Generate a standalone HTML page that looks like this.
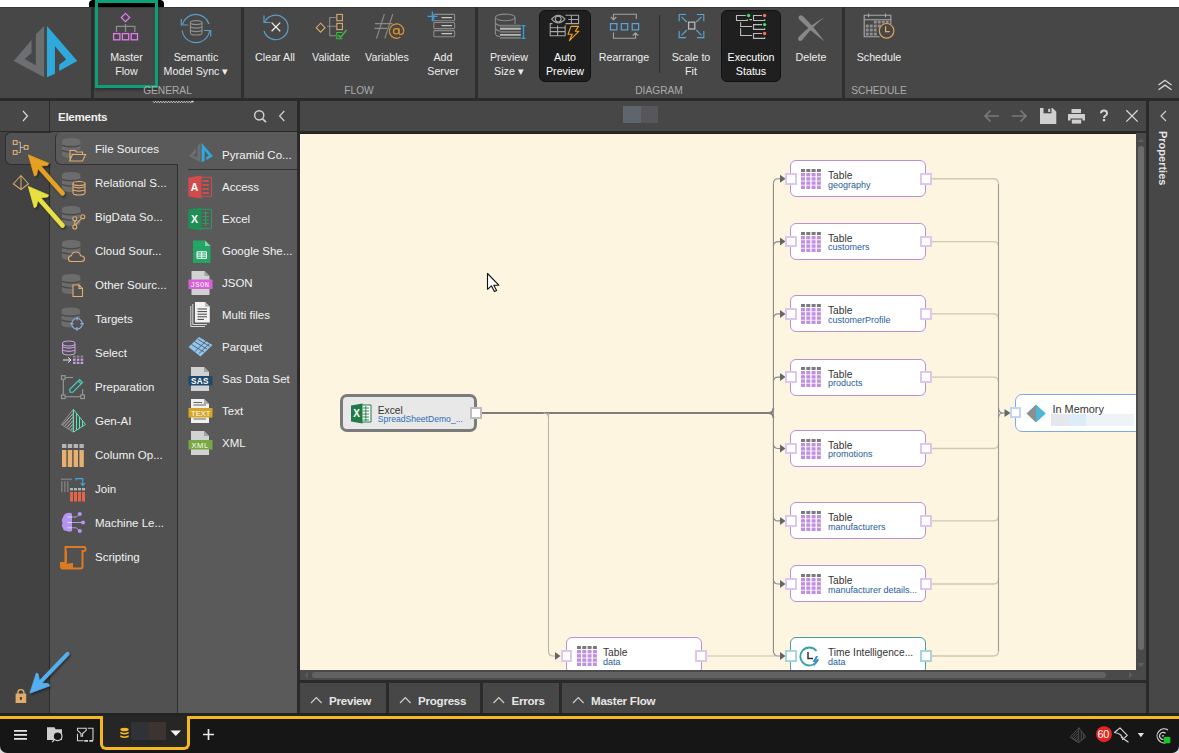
<!DOCTYPE html>
<html><head><meta charset="utf-8">
<style>
*{box-sizing:border-box;margin:0;padding:0}
html,body{width:1179px;height:753px;overflow:hidden;background:#fff;font-family:"Liberation Sans",sans-serif}
.a{position:absolute}
#ribbon{left:0;top:7px;width:1179px;height:91px;background:#474747}
.sep{position:absolute;top:7px;height:91px;width:3px;background:#2f2f2f}
.btn{position:absolute;top:50px;color:#ededed;font-size:10.7px;line-height:14px;text-align:center;white-space:nowrap}
.glabel{position:absolute;top:85px;color:#ababab;font-size:10.2px;line-height:12px;text-align:center}
#row2{left:0;top:98px;width:1179px;height:3px;background:#2a2a2a}
.hdr{position:absolute;top:101px;height:30px;background:#474747}
.cat{position:absolute;left:95px;color:#f2f2f2;font-size:11.5px;line-height:16px;white-space:nowrap}
.itm{position:absolute;left:222px;color:#f2f2f2;font-size:11.5px;line-height:16px;white-space:nowrap}
.node{position:absolute;background:#fff;border:1px solid #b98fd6;border-radius:6px;height:37px;width:136px}
.nt{position:absolute;font-size:10.2px;line-height:12px;color:#333;white-space:nowrap}
.ns{position:absolute;font-size:9px;line-height:10px;color:#1f5d9a;white-space:nowrap}
.port{position:absolute;width:11.6px;height:11.6px;background:#fff;border:2px solid #dcc8ef;margin:-0.5px 0 0 -0.5px}
.tab{top:683px;height:29.5px;background:#474747;color:#e6e6e6;font-size:11.6px;font-weight:700;letter-spacing:-0.25px;line-height:16px;padding:10px 0 0 29px;white-space:nowrap}
</style></head><body>
<!-- top white strip + black tab -->
<div class="a" style="left:89px;top:0;width:75px;height:8px;background:#000;border-radius:4px 4px 0 0"></div>
<div id="ribbon" class="a"></div>
<div class="a" style="left:0;top:7px;width:1179px;height:1px;background:#3a3a3a"></div>
<div class="sep" style="left:91px"></div>
<div class="sep" style="left:241px"></div>
<div class="sep" style="left:475px"></div>
<div class="sep" style="left:842px"></div>
<div id="row2" class="a"></div>

<!-- ribbon content -->
<div class="a" style="left:95px;top:0;width:63px;height:88px;border:3px solid #0ba077;box-shadow:0 2px 3px rgba(0,0,0,.35)"></div>
<div class="a" style="left:539px;top:10px;width:52px;height:72px;background:#1f1f1f;border:1px solid #121212;border-radius:6px"></div>
<div class="a" style="left:721px;top:10px;width:60px;height:72px;background:#1f1f1f;border:1px solid #121212;border-radius:6px"></div>
<div class="a" style="left:659px;top:15px;width:1px;height:58px;background:#2c2c2c"></div>
<svg class="a" style="left:0;top:0" width="1179" height="100" viewBox="0 0 1179 100">
 <g transform="translate(5,10) scale(0.10627)">
  <polygon fill="#6d6e70" points="368,150 368,632 82,480 250,283 250,405 185,460 290,520 290,230"/>
  <polygon fill="#2ea9dc" points="395,150 680,480 510,575 510,515 575,465 470,340 470,600 395,632"/>
 </g>
 <!-- master flow -->
 <g fill="none" stroke-width="1.3">
  <path d="M125.5 13.3 L129.7 17.5 L125.5 21.7 L121.3 17.5Z" stroke="#e47cf0" stroke-width="1.2"/>
  <path d="M125.5 24 V32 M116.5 32 V26.3 H134.8 V32" stroke="#8c8c8c"/>
  <rect x="113.6" y="33.6" width="6.3" height="6.2" stroke="#e47cf0"/>
  <rect x="122.4" y="33.6" width="6.3" height="6.2" stroke="#e47cf0"/>
  <rect x="131.2" y="33.6" width="6.3" height="6.2" stroke="#e47cf0"/>
 </g>
 <!-- semantic model sync -->
 <g fill="none" stroke="#5b9dc9" stroke-width="1.2">
  <path d="M182.5 24.5 A13.8 13.8 0 0 1 209 24"/>
  <path d="M182.2 30.5 A13.8 13.8 0 0 0 209.6 30.5"/>
  <path d="M181.3 19 V25 H188"/>
  <path d="M210.7 36.5 V30.5 H204"/>
 </g>
 <g fill="none" stroke="#8e8e8e" stroke-width="1.1">
  <ellipse cx="196.2" cy="22.6" rx="5.8" ry="2"/>
  <path d="M190.4 22.6 V33 A5.8 2 0 0 0 202 33 V22.6 M190.4 26.1 A5.8 2 0 0 0 202 26.1 M190.4 29.6 A5.8 2 0 0 0 202 29.6"/>
 </g>
 <!-- clear all -->
 <g fill="none" stroke-width="1.2">
  <path d="M264.7 22 A12.3 12.3 0 1 1 264 31" stroke="#5b9dc9"/>
  <path d="M264 15.5 V22.5 H270.5" stroke="#5b9dc9"/>
  <path d="M271.6 22.6 L280.2 31.2 M280.2 22.6 L271.6 31.2" stroke="#eeeeee" stroke-width="1.3"/>
 </g>
 <!-- validate -->
 <g fill="none" stroke-width="1.1">
  <path d="M320.6 23.2 L325 27.7 L320.6 32.2 L316.2 27.7Z" stroke="#d9a86a"/>
  <path d="M327 26.3 H336 M336 17.5 H329.7 V35.8 H336" stroke="#8c8c8c"/>
  <rect x="336.8" y="14.4" width="5.6" height="6.3" stroke="#d9a86a"/>
  <rect x="336.8" y="23.4" width="5.6" height="6.2" stroke="#d9a86a"/>
  <path d="M342.4 32.5 H336.8 V38.8 H342.4" stroke="#2ec43a"/>
  <path d="M338.5 35 L340.5 37.5 L346.5 30" stroke="#49b84f" stroke-width="1.3"/>
 </g>
 <!-- variables -->
 <g fill="none" stroke="#8a8a8a" stroke-width="1.1">
  <path d="M384.4 14 L376.5 38.5 M392.8 14 L384.8 38.5 M375 23.6 H392.5 M374.5 28.4 H387"/>
 </g>
 <g fill="none" stroke="#e0912e" stroke-width="1.2">
  <circle cx="396.2" cy="31.3" r="2.7"/>
  <path d="M399 28.3 V32.6 Q399.2 34.8 401.5 34.4 Q403.8 33.6 403.8 31 A7.2 7.2 0 1 0 400.3 37.3"/>
 </g>
 <!-- add server -->
 <g fill="none" stroke-width="1.1">
  <rect x="433.8" y="14.4" width="20.8" height="6.3" stroke="#8c8c8c" rx="0.8"/>
  <rect x="433.8" y="22.5" width="20.8" height="6.1" stroke="#8c8c8c" rx="0.8"/>
  <rect x="433.8" y="30.6" width="20.8" height="6.1" stroke="#8c8c8c" rx="0.8"/>
  <path d="M441.5 17.6 H452 M441.5 25.6 H452 M441.5 33.6 H452" stroke="#c8c8c8" stroke-width="1.2"/>
  <path d="M432.4 11.5 V21.5 M427.4 16.4 H437.4" stroke="#2fa3e6" stroke-width="1.4"/>
 </g>
 <!-- preview size -->
 <g fill="none" stroke="#8a8a8a" stroke-width="1.1">
  <ellipse cx="505.2" cy="17.4" rx="9.8" ry="3.3"/>
  <path d="M495.4 17.4 V33.5 Q495.6 36 500 36.7 M515 17.4 V24"/>
  <path d="M495.4 22.5 Q496 25 500 25.5 M495.4 28 Q496 30.5 500 31"/>
 </g>
 <g stroke-width="1.6">
  <path d="M500 28.8 H520.8 M500 34.9 H520.8" stroke="#b8b8b8" stroke-width="1.9"/>
  <path d="M500 25.8 H520.8 M500 31.9 H520.8 M500 37.9 H520.8" stroke="#787878" stroke-width="1.9"/>
  <path d="M523.5 25.6 V38.3 M521.5 25.6 H525.5 M521.5 38.3 H525.5" stroke="#2aa3e6" stroke-width="1.3"/>
 </g>
 <!-- auto preview -->
 <g fill="none" stroke="#a8a8a8" stroke-width="1.05">
  <path d="M551.6 19.1 Q558.3 11.5 565 19.1 Q558.3 26.7 551.6 19.1Z"/>
  <circle cx="558.2" cy="19.1" r="2.9"/>
  <path d="M565.5 15.2 H578.6 V23.6 H565.5 M568.2 19.5 H578.6 M571.4 15.2 V23.6"/>
  <path d="M552.5 23.6 H550.2 V35.8 H565.2 V25.3 M550.2 27.7 H565.2 M550.2 31.6 H565.2 M557.6 25.5 V35.8"/>
 </g>
 <path d="M571 26.4 H578.6 L575.2 31.2 H579 L569.4 40.6 L572.3 34.2 H568 Z" fill="none" stroke="#f2a41a" stroke-width="1.1" stroke-linejoin="round"/>
 <!-- rearrange -->
 <g fill="none" stroke="#a2a2a2" stroke-width="1.1">
  <path d="M636.3 19 V14.3 H613.5 V19.5 M610.8 17 L613.5 19.8 L616.3 17"/>
  <path d="M613.5 32.5 V38.3 H635.5 V33 M632.7 35.6 L635.5 32.8 L638.3 35.6"/>
 </g>
 <g fill="none" stroke="#5ba6d8" stroke-width="1.2">
  <rect x="610.5" y="23.6" width="6.4" height="6.3"/>
  <rect x="621.3" y="23.6" width="6.4" height="6.3"/>
  <rect x="632.2" y="23.6" width="6.4" height="6.3"/>
 </g>
 <!-- scale to fit -->
 <g fill="none" stroke="#5ba6d8" stroke-width="1.1">
  <path d="M679.2 21.2 V14.5 H686 M697 14.5 H703.8 V21.2 M703.8 31 V37.6 H697 M686 37.6 H679.2 V31"/>
  <path d="M681.5 16.8 L686.8 22 M701.5 16.8 L696.3 22 M701.5 35.3 L696.3 30 M681.5 35.3 L686.8 30"/>
 </g>
 <rect x="688.6" y="22.2" width="6.2" height="6.8" fill="none" stroke="#b8b8b8" stroke-width="1.3"/>
 <!-- execution status -->
 <g fill="none" stroke="#bdbdbd" stroke-width="1.1">
  <path d="M745.8 15.5 H736.5 V20.5 H747.3 V19.3 M749.3 19.6 H752 M762 15.5 H753.5 V20.5 H764.7 V19.3"/>
  <path d="M740.6 22.3 V26.5 H752 M762 24.6 H753.5 V29.4 H764.7 V28.2"/>
  <path d="M740.6 28.3 V35.5 H752 M762 33.5 H753.5 V38.4 H764.7 V37.2"/>
 </g>
 <circle cx="748.6" cy="15.5" r="1.7" fill="#3fe050"/>
 <circle cx="764.6" cy="15.5" r="1.7" fill="#f07552"/>
 <circle cx="764.6" cy="24.6" r="1.7" fill="#3fe050"/>
 <circle cx="764.6" cy="33.5" r="1.7" fill="#f07552"/>
 <!-- delete -->
 <path d="M803 16.3 Q814 27 824.5 41.5 Q811 31.5 799.3 19.6 Q797.6 17.6 799.2 15.9 Q801 14.6 803 16.3Z" fill="#888"/>
 <path d="M824.8 17 Q813 26 802.3 40 Q800.4 41.8 798.7 40.4 Q797.3 38.8 798.8 36.8 Q811 24.5 824.8 17Z" fill="#888"/>
 <!-- schedule -->
 <g fill="none" stroke="#a9a9a9" stroke-width="1.1">
  <path d="M879.5 36.8 H864.2 V15.2 H890.8 V24"/>
  <path d="M864.2 19.8 H890.8 M868.6 13.6 V17.2 M885.5 13.6 V17.2"/>
 </g>
 <g fill="#8f8f8f">
  <rect x="873.8" y="20.6" width="2.9" height="2.9"/><rect x="877.8" y="20.6" width="2.9" height="2.9"/><rect x="881.8" y="20.6" width="2.9" height="2.9"/><rect x="885.8" y="20.6" width="2.9" height="2.9"/>
  <rect x="865.8" y="24.6" width="2.9" height="2.9"/><rect x="869.8" y="24.6" width="2.9" height="2.9"/><rect x="873.8" y="24.6" width="2.9" height="2.9"/><rect x="877.8" y="24.6" width="2.9" height="2.9"/>
  <rect x="865.8" y="28.6" width="2.9" height="2.9"/><rect x="869.8" y="28.6" width="2.9" height="2.9"/><rect x="873.8" y="28.6" width="2.9" height="2.9"/>
  <rect x="865.8" y="32.6" width="2.9" height="2.9"/><rect x="869.8" y="32.6" width="2.9" height="2.9"/><rect x="873.8" y="32.6" width="2.9" height="2.9"/>
 </g>
 <circle cx="886.6" cy="30.8" r="7.3" fill="#474747" stroke="#d9a35c" stroke-width="1.2"/>
 <path d="M885.6 26.3 V31.6 H889.7" fill="none" stroke="#e0ad60" stroke-width="1.3"/>
 <!-- collapse -->
 <path d="M1158.5 85 L1165 80.3 L1171.5 85 M1158.5 89.8 L1165 85.1 L1171.5 89.8" fill="none" stroke="#d8d8d8" stroke-width="1.3"/>
</svg>
<div class="btn" style="left:96px;width:61px">Master<br>Flow</div>
<div class="btn" style="left:160px;width:72px">Semantic<br>Model Sync ▾</div>
<div class="btn" style="left:250px;width:50px">Clear All</div>
<div class="btn" style="left:306px;width:50px">Validate</div>
<div class="btn" style="left:360px;width:54px">Variables</div>
<div class="btn" style="left:418px;width:50px">Add<br>Server</div>
<div class="btn" style="left:484px;width:50px">Preview<br>Size ▾</div>
<div class="btn" style="left:540px;width:50px;color:#fff">Auto<br>Preview</div>
<div class="btn" style="left:596px;width:56px">Rearrange</div>
<div class="btn" style="left:666px;width:50px">Scale to<br>Fit</div>
<div class="btn" style="left:722px;width:58px;color:#fff">Execution<br>Status</div>
<div class="btn" style="left:786px;width:50px">Delete</div>
<div class="btn" style="left:850px;width:58px">Schedule</div>
<div class="glabel" style="left:130px;width:75px">GENERAL</div>
<div class="glabel" style="left:330px;width:58px">FLOW</div>
<div class="glabel" style="left:620px;width:78px">DIAGRAM</div>
<div class="glabel" style="left:840px;width:78px">SCHEDULE</div>


<!-- second row backgrounds -->
<div class="a" style="left:0;top:100px;width:49px;height:613px;background:#424242"></div>
<div class="a" style="left:49px;top:100px;width:1px;height:613px;background:#2a2a2a"></div>
<div class="hdr" style="left:50px;width:247px"></div>
<div class="a" style="left:50px;top:131px;width:247px;height:1px;background:#2a2a2a"></div>
<div class="a" style="left:50px;top:132px;width:128px;height:581px;background:#515151"></div>
<div class="a" style="left:177px;top:164px;width:1px;height:549px;background:#2e2e2e"></div>
<div class="a" style="left:178px;top:132px;width:119px;height:581px;background:#5a5a5a"></div>
<div class="a" style="left:297px;top:100px;width:3px;height:613px;background:#2a2a2a"></div>
<div class="hdr" style="left:300px;width:846px"></div>
<div class="a" style="left:300px;top:131px;width:846px;height:2px;background:#2a2a2a"></div>
<div class="a" style="left:300px;top:133px;width:837px;height:537px;background:#fdf5df"></div>
<div class="a" style="left:1146px;top:100px;width:3px;height:613px;background:#2a2a2a"></div>
<div class="a" style="left:1149px;top:100px;width:30px;height:613px;background:#474747"></div>
<div class="a" style="left:0;top:98px;width:1179px;height:3px;background:#2a2a2a"></div>



<!-- canvas -->
<div class="a" style="left:300px;top:133px;width:836px;height:537px;overflow:hidden">
<svg class="a" style="left:0;top:0" width="836" height="537" viewBox="0 0 836 537">
<path d="M181.0 280.0 H468.4 Q473.4 280 473.4 275 M468.4 280 Q473.4 280 473.4 285" stroke="#7d7d7d" stroke-width="1.8" fill="none"/>
<path d="M243.5 280 Q248.5 280 248.5 285" stroke="#bab4a6" stroke-width="1.1" fill="none"/>
<path d="M473.4 51.0 V518.0" stroke="#8a8a8a" stroke-width="1.1" fill="none"/>
<path d="M473.4 50.8 Q473.4 45.8 478.4 45.8 H480.0" stroke="#8a8a8a" stroke-width="1.1" fill="none"/>
<path d="M473.4 113.6 Q473.4 108.6 478.4 108.6 H480.0" stroke="#8a8a8a" stroke-width="1.1" fill="none"/>
<path d="M473.4 185.9 Q473.4 180.9 478.4 180.9 H480.0" stroke="#8a8a8a" stroke-width="1.1" fill="none"/>
<path d="M473.4 249.1 Q473.4 244.1 478.4 244.1 H480.0" stroke="#8a8a8a" stroke-width="1.1" fill="none"/>
<path d="M473.4 310.5 Q473.4 315.5 478.4 315.5 H480.0" stroke="#8a8a8a" stroke-width="1.1" fill="none"/>
<path d="M473.4 382.9 Q473.4 387.9 478.4 387.9 H480.0" stroke="#8a8a8a" stroke-width="1.1" fill="none"/>
<path d="M473.4 446.0 Q473.4 451.0 478.4 451.0 H480.0" stroke="#8a8a8a" stroke-width="1.1" fill="none"/>
<path d="M473.4 518.0 Q473.4 523.0 478.4 523.0 H480.0" stroke="#8a8a8a" stroke-width="1.1" fill="none"/>
<path d="M248.5 280.0 V518.0 Q248.5 523.0 253.5 523.0 H255.0" stroke="#bab4a6" stroke-width="1.1" fill="none"/>
<path d="M480.0 41.8 L485.5 45.8 L480.0 49.8Z" fill="#666"/>
<path d="M480.0 104.6 L485.5 108.6 L480.0 112.6Z" fill="#666"/>
<path d="M480.0 176.9 L485.5 180.9 L480.0 184.9Z" fill="#666"/>
<path d="M480.0 240.1 L485.5 244.1 L480.0 248.1Z" fill="#666"/>
<path d="M480.0 311.5 L485.5 315.5 L480.0 319.5Z" fill="#666"/>
<path d="M480.0 383.9 L485.5 387.9 L480.0 391.9Z" fill="#666"/>
<path d="M480.0 447.0 L485.5 451.0 L480.0 455.0Z" fill="#666"/>
<path d="M480.0 519.0 L485.5 523.0 L480.0 527.0Z" fill="#666"/>
<path d="M255.0 519.0 L260.5 523.0 L255.0 527.0Z" fill="#666"/>
<path d="M704.5 276.0 L710.5 280.0 L704.5 284.0Z" fill="#666"/>
<path d="M406.0 523.0 H480.0" stroke="#c9c2b0" stroke-width="1.1" fill="none"/>
<path d="M631.0 45.8 H693.5 Q698.5 45.8 698.5 50.8" stroke="#cfc8b4" stroke-width="1.4" fill="none"/>
<path d="M631.0 108.6 H693.5 Q698.5 108.6 698.5 113.6" stroke="#cfc8b4" stroke-width="1.4" fill="none"/>
<path d="M631.0 180.9 H693.5 Q698.5 180.9 698.5 185.9" stroke="#cfc8b4" stroke-width="1.4" fill="none"/>
<path d="M631.0 244.1 H693.5 Q698.5 244.1 698.5 249.1" stroke="#cfc8b4" stroke-width="1.4" fill="none"/>
<path d="M631.0 315.5 H693.5 Q698.5 315.5 698.5 310.5" stroke="#cfc8b4" stroke-width="1.4" fill="none"/>
<path d="M631.0 387.9 H693.5 Q698.5 387.9 698.5 382.9" stroke="#cfc8b4" stroke-width="1.4" fill="none"/>
<path d="M631.0 451.0 H693.5 Q698.5 451.0 698.5 446.0" stroke="#cfc8b4" stroke-width="1.4" fill="none"/>
<path d="M631.0 523.0 H693.5 Q698.5 523.0 698.5 518.0" stroke="#cfc8b4" stroke-width="1.4" fill="none"/>
<path d="M698.5 51.0 V518.0" stroke="#9a9a9a" stroke-width="1.1" fill="none"/>
<path d="M698.5 275.0 Q698.5 280.0 703.5 280.0 H705.0 M698.5 285.0 Q698.5 280.0 703.5 280.0" stroke="#8a8a8a" stroke-width="1.1" fill="none"/>
</svg>
<div class="node" style="left:490px;top:27.2px"></div>
<svg class="a" style="left:501.0px;top:36.0px" width="21" height="21" viewBox="0 0 21 21"><rect x="0.0" y="0.0" width="4" height="3" fill="#7a7a7a"/><rect x="5.3" y="0.0" width="4" height="3" fill="#7a7a7a"/><rect x="10.6" y="0.0" width="4" height="3" fill="#7a7a7a"/><rect x="15.9" y="0.0" width="4" height="3" fill="#7a7a7a"/><rect x="0.0" y="4.0" width="4" height="3.4" fill="#c18fe0"/><rect x="5.3" y="4.0" width="4" height="3.4" fill="#c18fe0"/><rect x="10.6" y="4.0" width="4" height="3.4" fill="#c18fe0"/><rect x="15.9" y="4.0" width="4" height="3.4" fill="#c18fe0"/><rect x="0.0" y="8.2" width="4" height="3.4" fill="#c18fe0"/><rect x="5.3" y="8.2" width="4" height="3.4" fill="#c18fe0"/><rect x="10.6" y="8.2" width="4" height="3.4" fill="#c18fe0"/><rect x="15.9" y="8.2" width="4" height="3.4" fill="#c18fe0"/><rect x="0.0" y="12.4" width="4" height="3.4" fill="#c18fe0"/><rect x="5.3" y="12.4" width="4" height="3.4" fill="#c18fe0"/><rect x="10.6" y="12.4" width="4" height="3.4" fill="#c18fe0"/><rect x="15.9" y="12.4" width="4" height="3.4" fill="#c18fe0"/><rect x="0.0" y="16.6" width="4" height="3.4" fill="#c18fe0"/><rect x="5.3" y="16.6" width="4" height="3.4" fill="#c18fe0"/><rect x="10.6" y="16.6" width="4" height="3.4" fill="#c18fe0"/><rect x="15.9" y="16.6" width="4" height="3.4" fill="#c18fe0"/></svg>
<div class="nt" style="left:528px;top:37.2px">Table</div>
<div class="ns" style="left:528px;top:46.6px">geography</div>
<div class="port" style="left:485.5px;top:40.5px"></div>
<div class="port" style="left:620.5px;top:40.5px"></div>
<div class="node" style="left:490px;top:90.0px"></div>
<svg class="a" style="left:501.0px;top:98.8px" width="21" height="21" viewBox="0 0 21 21"><rect x="0.0" y="0.0" width="4" height="3" fill="#7a7a7a"/><rect x="5.3" y="0.0" width="4" height="3" fill="#7a7a7a"/><rect x="10.6" y="0.0" width="4" height="3" fill="#7a7a7a"/><rect x="15.9" y="0.0" width="4" height="3" fill="#7a7a7a"/><rect x="0.0" y="4.0" width="4" height="3.4" fill="#c18fe0"/><rect x="5.3" y="4.0" width="4" height="3.4" fill="#c18fe0"/><rect x="10.6" y="4.0" width="4" height="3.4" fill="#c18fe0"/><rect x="15.9" y="4.0" width="4" height="3.4" fill="#c18fe0"/><rect x="0.0" y="8.2" width="4" height="3.4" fill="#c18fe0"/><rect x="5.3" y="8.2" width="4" height="3.4" fill="#c18fe0"/><rect x="10.6" y="8.2" width="4" height="3.4" fill="#c18fe0"/><rect x="15.9" y="8.2" width="4" height="3.4" fill="#c18fe0"/><rect x="0.0" y="12.4" width="4" height="3.4" fill="#c18fe0"/><rect x="5.3" y="12.4" width="4" height="3.4" fill="#c18fe0"/><rect x="10.6" y="12.4" width="4" height="3.4" fill="#c18fe0"/><rect x="15.9" y="12.4" width="4" height="3.4" fill="#c18fe0"/><rect x="0.0" y="16.6" width="4" height="3.4" fill="#c18fe0"/><rect x="5.3" y="16.6" width="4" height="3.4" fill="#c18fe0"/><rect x="10.6" y="16.6" width="4" height="3.4" fill="#c18fe0"/><rect x="15.9" y="16.6" width="4" height="3.4" fill="#c18fe0"/></svg>
<div class="nt" style="left:528px;top:100.0px">Table</div>
<div class="ns" style="left:528px;top:109.4px">customers</div>
<div class="port" style="left:485.5px;top:103.3px"></div>
<div class="port" style="left:620.5px;top:103.3px"></div>
<div class="node" style="left:490px;top:162.3px"></div>
<svg class="a" style="left:501.0px;top:171.1px" width="21" height="21" viewBox="0 0 21 21"><rect x="0.0" y="0.0" width="4" height="3" fill="#7a7a7a"/><rect x="5.3" y="0.0" width="4" height="3" fill="#7a7a7a"/><rect x="10.6" y="0.0" width="4" height="3" fill="#7a7a7a"/><rect x="15.9" y="0.0" width="4" height="3" fill="#7a7a7a"/><rect x="0.0" y="4.0" width="4" height="3.4" fill="#c18fe0"/><rect x="5.3" y="4.0" width="4" height="3.4" fill="#c18fe0"/><rect x="10.6" y="4.0" width="4" height="3.4" fill="#c18fe0"/><rect x="15.9" y="4.0" width="4" height="3.4" fill="#c18fe0"/><rect x="0.0" y="8.2" width="4" height="3.4" fill="#c18fe0"/><rect x="5.3" y="8.2" width="4" height="3.4" fill="#c18fe0"/><rect x="10.6" y="8.2" width="4" height="3.4" fill="#c18fe0"/><rect x="15.9" y="8.2" width="4" height="3.4" fill="#c18fe0"/><rect x="0.0" y="12.4" width="4" height="3.4" fill="#c18fe0"/><rect x="5.3" y="12.4" width="4" height="3.4" fill="#c18fe0"/><rect x="10.6" y="12.4" width="4" height="3.4" fill="#c18fe0"/><rect x="15.9" y="12.4" width="4" height="3.4" fill="#c18fe0"/><rect x="0.0" y="16.6" width="4" height="3.4" fill="#c18fe0"/><rect x="5.3" y="16.6" width="4" height="3.4" fill="#c18fe0"/><rect x="10.6" y="16.6" width="4" height="3.4" fill="#c18fe0"/><rect x="15.9" y="16.6" width="4" height="3.4" fill="#c18fe0"/></svg>
<div class="nt" style="left:528px;top:172.3px">Table</div>
<div class="ns" style="left:528px;top:181.7px">customerProfile</div>
<div class="port" style="left:485.5px;top:175.6px"></div>
<div class="port" style="left:620.5px;top:175.6px"></div>
<div class="node" style="left:490px;top:225.5px"></div>
<svg class="a" style="left:501.0px;top:234.3px" width="21" height="21" viewBox="0 0 21 21"><rect x="0.0" y="0.0" width="4" height="3" fill="#7a7a7a"/><rect x="5.3" y="0.0" width="4" height="3" fill="#7a7a7a"/><rect x="10.6" y="0.0" width="4" height="3" fill="#7a7a7a"/><rect x="15.9" y="0.0" width="4" height="3" fill="#7a7a7a"/><rect x="0.0" y="4.0" width="4" height="3.4" fill="#c18fe0"/><rect x="5.3" y="4.0" width="4" height="3.4" fill="#c18fe0"/><rect x="10.6" y="4.0" width="4" height="3.4" fill="#c18fe0"/><rect x="15.9" y="4.0" width="4" height="3.4" fill="#c18fe0"/><rect x="0.0" y="8.2" width="4" height="3.4" fill="#c18fe0"/><rect x="5.3" y="8.2" width="4" height="3.4" fill="#c18fe0"/><rect x="10.6" y="8.2" width="4" height="3.4" fill="#c18fe0"/><rect x="15.9" y="8.2" width="4" height="3.4" fill="#c18fe0"/><rect x="0.0" y="12.4" width="4" height="3.4" fill="#c18fe0"/><rect x="5.3" y="12.4" width="4" height="3.4" fill="#c18fe0"/><rect x="10.6" y="12.4" width="4" height="3.4" fill="#c18fe0"/><rect x="15.9" y="12.4" width="4" height="3.4" fill="#c18fe0"/><rect x="0.0" y="16.6" width="4" height="3.4" fill="#c18fe0"/><rect x="5.3" y="16.6" width="4" height="3.4" fill="#c18fe0"/><rect x="10.6" y="16.6" width="4" height="3.4" fill="#c18fe0"/><rect x="15.9" y="16.6" width="4" height="3.4" fill="#c18fe0"/></svg>
<div class="nt" style="left:528px;top:235.5px">Table</div>
<div class="ns" style="left:528px;top:244.9px">products</div>
<div class="port" style="left:485.5px;top:238.8px"></div>
<div class="port" style="left:620.5px;top:238.8px"></div>
<div class="node" style="left:490px;top:296.9px"></div>
<svg class="a" style="left:501.0px;top:305.7px" width="21" height="21" viewBox="0 0 21 21"><rect x="0.0" y="0.0" width="4" height="3" fill="#7a7a7a"/><rect x="5.3" y="0.0" width="4" height="3" fill="#7a7a7a"/><rect x="10.6" y="0.0" width="4" height="3" fill="#7a7a7a"/><rect x="15.9" y="0.0" width="4" height="3" fill="#7a7a7a"/><rect x="0.0" y="4.0" width="4" height="3.4" fill="#c18fe0"/><rect x="5.3" y="4.0" width="4" height="3.4" fill="#c18fe0"/><rect x="10.6" y="4.0" width="4" height="3.4" fill="#c18fe0"/><rect x="15.9" y="4.0" width="4" height="3.4" fill="#c18fe0"/><rect x="0.0" y="8.2" width="4" height="3.4" fill="#c18fe0"/><rect x="5.3" y="8.2" width="4" height="3.4" fill="#c18fe0"/><rect x="10.6" y="8.2" width="4" height="3.4" fill="#c18fe0"/><rect x="15.9" y="8.2" width="4" height="3.4" fill="#c18fe0"/><rect x="0.0" y="12.4" width="4" height="3.4" fill="#c18fe0"/><rect x="5.3" y="12.4" width="4" height="3.4" fill="#c18fe0"/><rect x="10.6" y="12.4" width="4" height="3.4" fill="#c18fe0"/><rect x="15.9" y="12.4" width="4" height="3.4" fill="#c18fe0"/><rect x="0.0" y="16.6" width="4" height="3.4" fill="#c18fe0"/><rect x="5.3" y="16.6" width="4" height="3.4" fill="#c18fe0"/><rect x="10.6" y="16.6" width="4" height="3.4" fill="#c18fe0"/><rect x="15.9" y="16.6" width="4" height="3.4" fill="#c18fe0"/></svg>
<div class="nt" style="left:528px;top:306.9px">Table</div>
<div class="ns" style="left:528px;top:316.3px">promotions</div>
<div class="port" style="left:485.5px;top:310.2px"></div>
<div class="port" style="left:620.5px;top:310.2px"></div>
<div class="node" style="left:490px;top:369.3px"></div>
<svg class="a" style="left:501.0px;top:378.1px" width="21" height="21" viewBox="0 0 21 21"><rect x="0.0" y="0.0" width="4" height="3" fill="#7a7a7a"/><rect x="5.3" y="0.0" width="4" height="3" fill="#7a7a7a"/><rect x="10.6" y="0.0" width="4" height="3" fill="#7a7a7a"/><rect x="15.9" y="0.0" width="4" height="3" fill="#7a7a7a"/><rect x="0.0" y="4.0" width="4" height="3.4" fill="#c18fe0"/><rect x="5.3" y="4.0" width="4" height="3.4" fill="#c18fe0"/><rect x="10.6" y="4.0" width="4" height="3.4" fill="#c18fe0"/><rect x="15.9" y="4.0" width="4" height="3.4" fill="#c18fe0"/><rect x="0.0" y="8.2" width="4" height="3.4" fill="#c18fe0"/><rect x="5.3" y="8.2" width="4" height="3.4" fill="#c18fe0"/><rect x="10.6" y="8.2" width="4" height="3.4" fill="#c18fe0"/><rect x="15.9" y="8.2" width="4" height="3.4" fill="#c18fe0"/><rect x="0.0" y="12.4" width="4" height="3.4" fill="#c18fe0"/><rect x="5.3" y="12.4" width="4" height="3.4" fill="#c18fe0"/><rect x="10.6" y="12.4" width="4" height="3.4" fill="#c18fe0"/><rect x="15.9" y="12.4" width="4" height="3.4" fill="#c18fe0"/><rect x="0.0" y="16.6" width="4" height="3.4" fill="#c18fe0"/><rect x="5.3" y="16.6" width="4" height="3.4" fill="#c18fe0"/><rect x="10.6" y="16.6" width="4" height="3.4" fill="#c18fe0"/><rect x="15.9" y="16.6" width="4" height="3.4" fill="#c18fe0"/></svg>
<div class="nt" style="left:528px;top:379.3px">Table</div>
<div class="ns" style="left:528px;top:388.7px">manufacturers</div>
<div class="port" style="left:485.5px;top:382.6px"></div>
<div class="port" style="left:620.5px;top:382.6px"></div>
<div class="node" style="left:490px;top:432.4px"></div>
<svg class="a" style="left:501.0px;top:441.2px" width="21" height="21" viewBox="0 0 21 21"><rect x="0.0" y="0.0" width="4" height="3" fill="#7a7a7a"/><rect x="5.3" y="0.0" width="4" height="3" fill="#7a7a7a"/><rect x="10.6" y="0.0" width="4" height="3" fill="#7a7a7a"/><rect x="15.9" y="0.0" width="4" height="3" fill="#7a7a7a"/><rect x="0.0" y="4.0" width="4" height="3.4" fill="#c18fe0"/><rect x="5.3" y="4.0" width="4" height="3.4" fill="#c18fe0"/><rect x="10.6" y="4.0" width="4" height="3.4" fill="#c18fe0"/><rect x="15.9" y="4.0" width="4" height="3.4" fill="#c18fe0"/><rect x="0.0" y="8.2" width="4" height="3.4" fill="#c18fe0"/><rect x="5.3" y="8.2" width="4" height="3.4" fill="#c18fe0"/><rect x="10.6" y="8.2" width="4" height="3.4" fill="#c18fe0"/><rect x="15.9" y="8.2" width="4" height="3.4" fill="#c18fe0"/><rect x="0.0" y="12.4" width="4" height="3.4" fill="#c18fe0"/><rect x="5.3" y="12.4" width="4" height="3.4" fill="#c18fe0"/><rect x="10.6" y="12.4" width="4" height="3.4" fill="#c18fe0"/><rect x="15.9" y="12.4" width="4" height="3.4" fill="#c18fe0"/><rect x="0.0" y="16.6" width="4" height="3.4" fill="#c18fe0"/><rect x="5.3" y="16.6" width="4" height="3.4" fill="#c18fe0"/><rect x="10.6" y="16.6" width="4" height="3.4" fill="#c18fe0"/><rect x="15.9" y="16.6" width="4" height="3.4" fill="#c18fe0"/></svg>
<div class="nt" style="left:528px;top:442.4px">Table</div>
<div class="ns" style="left:528px;top:451.8px">manufacturer details...</div>
<div class="port" style="left:485.5px;top:445.7px"></div>
<div class="port" style="left:620.5px;top:445.7px"></div>
<div class="node" style="left:265.5px;top:504.4px"></div>
<svg class="a" style="left:276.5px;top:513.2px" width="21" height="21" viewBox="0 0 21 21"><rect x="0.0" y="0.0" width="4" height="3" fill="#7a7a7a"/><rect x="5.3" y="0.0" width="4" height="3" fill="#7a7a7a"/><rect x="10.6" y="0.0" width="4" height="3" fill="#7a7a7a"/><rect x="15.9" y="0.0" width="4" height="3" fill="#7a7a7a"/><rect x="0.0" y="4.0" width="4" height="3.4" fill="#c18fe0"/><rect x="5.3" y="4.0" width="4" height="3.4" fill="#c18fe0"/><rect x="10.6" y="4.0" width="4" height="3.4" fill="#c18fe0"/><rect x="15.9" y="4.0" width="4" height="3.4" fill="#c18fe0"/><rect x="0.0" y="8.2" width="4" height="3.4" fill="#c18fe0"/><rect x="5.3" y="8.2" width="4" height="3.4" fill="#c18fe0"/><rect x="10.6" y="8.2" width="4" height="3.4" fill="#c18fe0"/><rect x="15.9" y="8.2" width="4" height="3.4" fill="#c18fe0"/><rect x="0.0" y="12.4" width="4" height="3.4" fill="#c18fe0"/><rect x="5.3" y="12.4" width="4" height="3.4" fill="#c18fe0"/><rect x="10.6" y="12.4" width="4" height="3.4" fill="#c18fe0"/><rect x="15.9" y="12.4" width="4" height="3.4" fill="#c18fe0"/><rect x="0.0" y="16.6" width="4" height="3.4" fill="#c18fe0"/><rect x="5.3" y="16.6" width="4" height="3.4" fill="#c18fe0"/><rect x="10.6" y="16.6" width="4" height="3.4" fill="#c18fe0"/><rect x="15.9" y="16.6" width="4" height="3.4" fill="#c18fe0"/></svg>
<div class="nt" style="left:303px;top:514.4px">Table</div>
<div class="ns" style="left:303px;top:523.8px">data</div>
<div class="port" style="left:261px;top:517.7px"></div>
<div class="port" style="left:395.5px;top:517.7px"></div>
<div class="node" style="left:490px;top:504.4px;border-color:#4a9aa8"></div>
<svg class="a" style="left:499px;top:513px" width="22" height="22" viewBox="0 0 22 22"><path d="M17.5 5 A9 9 0 1 0 19 13" fill="none" stroke="#3aa0a8" stroke-width="1.8"/><path d="M9 6 V12.5 H14" fill="none" stroke="#333" stroke-width="1.5"/><path d="M17 10 L13.5 16 H16.3 L14.5 21 L20 14 H17.3 L19 10Z" fill="#3a8fd6"/></svg>
<div class="nt" style="left:528px;top:514.4px">Time Intelligence...</div>
<div class="ns" style="left:528px;top:523.8px">data</div>
<div class="port" style="left:485.5px;top:517.7px;border-color:#a8d4dc"></div>
<div class="port" style="left:620.5px;top:517.7px;border-color:#a8d4dc"></div>
<div class="a" style="left:40px;top:260.7px;width:136.5px;height:38.6px;background:#e8e8e8;border:3px solid #7b7b7b;border-radius:7px"></div>
<svg class="a" style="left:50.5px;top:269.5px" width="21" height="21" viewBox="0 0 21 21"><path d="M9 2 H20 V19 H9" fill="#fff" stroke="#1f7a45" stroke-width="1"/><path d="M11.5 5 H18 M11.5 8 H18 M11.5 11 H18 M11.5 14 H18 M11.5 17 H18 M14.8 3 V18" stroke="#1f7a45" stroke-width="0.9"/><path d="M0 2.5 L11.5 0.5 V20.5 L0 18.5Z" fill="#1f7a45"/><text x="2.2" y="14.3" font-family="Liberation Sans" font-weight="700" font-size="10" fill="#fff">X</text></svg>
<div class="nt" style="left:77.80000000000001px;top:271.6px;font-size:10.2px">Excel</div>
<div class="ns" style="left:77.80000000000001px;top:281.3px;color:#2e6db5;font-size:8.6px">SpreadSheetDemo_...</div>
<div class="port" style="left:170.5px;top:274.7px;border-color:#bdbdbd"></div>
<div class="a" style="left:715.3px;top:261px;width:140px;height:37.5px;background:#fff;border:1px solid #7ea8ee;border-radius:7px"></div>
<div class="port" style="left:710.3px;top:274.3px;border-color:#c2d5f5"></div>
<svg class="a" style="left:726px;top:271px" width="21" height="19" viewBox="0 0 21 19"><path d="M10 0.4 L0.5 9.5 L10 18.4Z" fill="#8e8e8e"/><path d="M10 0.4 L19.8 9.5 L10 18.4Z" fill="#4cb6d6"/></svg>
<div class="a" style="left:751px;top:281px;width:18px;height:11.5px;background:#e6e7ec"></div><div class="a" style="left:769px;top:281px;width:17px;height:11.5px;background:#dcecf8"></div><div class="a" style="left:786px;top:281px;width:48px;height:11.5px;background:#eef3f8"></div><div class="nt" style="left:752.5px;top:270.3px;font-size:10.9px">In Memory</div>
</div>


<svg class="a" style="left:150px;top:99px" width="46" height="6" viewBox="150 99 46 6"><polyline points="153.0 101.3 154.3 102.6 155.6 101.3 156.9 102.6 158.2 101.3 159.5 102.6 160.8 101.3 162.1 102.6 163.4 101.3 164.7 102.6 166.0 101.3 167.3 102.6 168.6 101.3 169.9 102.6 171.2 101.3 172.5 102.6 173.8 101.3 175.1 102.6 176.4 101.3 177.7 102.6 179.0 101.3 180.3 102.6 181.6 101.3 182.9 102.6 184.2 101.3 185.5 102.6 186.8 101.3 188.1 102.6 189.4 101.3 190.7 102.6 192.0 101.3" fill="none" stroke="#e0e0e0" stroke-width="1"/><rect x="191.5" y="100.8" width="2" height="1.6" fill="#e0e0e0"/></svg>
<!-- canvas header icons -->
<div class="a" style="left:623px;top:106px;width:18px;height:17px;background:#5f656c"></div>
<div class="a" style="left:641px;top:106px;width:17px;height:17px;background:#56565b"></div>
<div class="a" style="left:300px;top:133px;width:846px;height:1px;background:#222"></div>
<svg class="a" style="left:960px;top:100px" width="219" height="100" viewBox="960 100 219 100">
 <path d="M999 116 H985 M990.5 110.5 L985 116 L990.5 121.5" fill="none" stroke="#7a7a7a" stroke-width="1.6"/>
 <path d="M1012 116 H1026 M1020.5 110.5 L1026 116 L1020.5 121.5" fill="none" stroke="#7a7a7a" stroke-width="1.6"/>
 <path d="M1040 108 H1052.5 L1056.3 111.8 V124 H1040Z" fill="#d0d0d0"/>
 <rect x="1043.5" y="108" width="8" height="5.3" fill="#474747"/>
 <rect x="1048.2" y="108.8" width="2" height="3.2" fill="#d0d0d0"/>
 <path d="M1071.5 109 H1081 V113 H1071.5Z" fill="#d0d0d0"/>
 <path d="M1068.5 114 H1084 Q1085 114 1085 115 V120.5 H1068 V115 Q1068 114 1068.5 114Z" fill="#d0d0d0"/>
 <rect x="1070.5" y="118.5" width="12" height="6" fill="#474747"/>
 <rect x="1071.8" y="119.6" width="9.4" height="4" fill="#d0d0d0"/>
 <path d="M1101 113.3 Q1101 110.6 1104 110.6 Q1107 110.6 1107 113.2 Q1107 114.9 1105.2 115.8 Q1104 116.5 1104 118" fill="none" stroke="#d6d6d6" stroke-width="2"/><rect x="1102.8" y="119" width="2.4" height="2.3" rx="0.5" fill="#d6d6d6"/>
 <path d="M1126.3 110.2 L1137.7 121.6 M1137.7 110.2 L1126.3 121.6" stroke="#d8d8d8" stroke-width="1.3"/>
 <path d="M1166 111 L1161 116 L1166 121" fill="none" stroke="#d0d0d0" stroke-width="1.2"/>
 <!-- v scrollbar -->
 <path d="M1137 142 L1141 137.5 L1145 142Z" fill="#5e5e5e"/>
</svg>
<div class="a" style="left:1136px;top:133px;width:10px;height:547px;background:#4a4a4a"></div>
<div class="a" style="left:1137.8px;top:146px;width:6.4px;height:503.5px;background:#6b6b6b;border-radius:3px"></div>
<svg class="a" style="left:1136px;top:133px" width="10" height="12" viewBox="0 0 10 12"><path d="M1.5 9 L5 5.5 L8.5 9Z" fill="#5e5e5e"/></svg>
<svg class="a" style="left:1136px;top:660px" width="10" height="12" viewBox="0 0 10 12"><path d="M1.5 3 L5 7 L8.5 3Z" fill="#5e5e5e"/></svg>
<div class="a" style="left:300px;top:670px;width:836px;height:10px;background:#4a4a4a"></div>
<div class="a" style="left:312px;top:672px;width:794px;height:6.4px;background:#626262;border-radius:3px"></div>
<svg class="a" style="left:300px;top:670px" width="836" height="10" viewBox="0 0 836 10"><path d="M8 1.5 L4.5 5 L8 8.5Z" fill="#5a5a5a"/><path d="M829 1.5 L832.5 5 L829 8.5Z" fill="#5e5e5e"/></svg>
<div class="a" style="left:300px;top:680px;width:846px;height:3px;background:#2a2a2a"></div>
<!-- bottom tabs -->
<div class="a" style="left:300px;top:683px;width:846px;height:30px;background:#2a2a2a"></div>
<div class="a tab" style="left:300px;width:86px">Preview</div>
<div class="a tab" style="left:389px;width:90.5px">Progress</div>
<div class="a tab" style="left:482.5px;width:76px">Errors</div>
<div class="a tab" style="left:562px;width:584px">Master Flow</div>
<svg class="a" style="left:300px;top:683px" width="846" height="30" viewBox="300 683 846 30">
 <g fill="none" stroke="#d0d0d0" stroke-width="1.2"><path d="M311 703 L316.3 697.7 L321.6 703"/><path d="M400 703 L405.3 697.7 L410.6 703"/><path d="M493.5 703 L498.8 697.7 L504.1 703"/><path d="M573 703 L578.3 697.7 L583.6 703"/></g>
</svg>
<!-- properties -->
<div class="a" style="left:1145px;top:130px;width:34px;height:16px;transform-origin:0 0;transform:translate(1171px,0) rotate(90deg);left:0;top:130.8px;color:#e4e4e4;font-size:11px;font-weight:700;line-height:16px;white-space:nowrap">Properties</div>

<svg class="a" style="left:480px;top:268px" width="25" height="28" viewBox="480 268 25 28"><path d="M487.5 273.5 V289.3 L491.4 285.8 L494.4 291.6 L496.6 290.6 L493.8 285.2 H498.8Z" fill="#fff" stroke="#111" stroke-width="1.1" stroke-linejoin="round"/></svg>
<!-- left panel -->
<div class="a" style="left:0;top:101px;width:49px;height:30px;background:#474747"></div>
<div class="a" style="left:0;top:131px;width:50px;height:1px;background:#2a2a2a"></div>
<div class="a" style="left:4.5px;top:132px;width:46px;height:32.5px;background:#525252;border:1px solid #2e2e2e;border-right:none;border-radius:6px 0 0 6px"></div>
<div class="a" style="left:55px;top:132px;width:123px;height:32.5px;background:#5a5a5a;border:1px solid #333;border-right:none;border-top:none;border-radius:6px 0 0 6px"></div>
<div class="a" style="left:49px;top:164px;width:1px;height:549px;background:#2a2a2a"></div>
<div class="a" style="left:58px;top:108.5px;color:#f0f0f0;font-size:11.6px;font-weight:700;letter-spacing:-0.3px;line-height:16px">Elements</div>
<div class="cat" style="top:141.0px">File Sources</div>
<div class="cat" style="top:175.0px">Relational S...</div>
<div class="cat" style="top:209.0px">BigData So...</div>
<div class="cat" style="top:243.0px">Cloud Sour...</div>
<div class="cat" style="top:277.0px">Other Sourc...</div>
<div class="cat" style="top:311.0px">Targets</div>
<div class="cat" style="top:345.0px">Select</div>
<div class="cat" style="top:379.0px">Preparation</div>
<div class="cat" style="top:413.0px">Gen-AI</div>
<div class="cat" style="top:447.0px">Column Op...</div>
<div class="cat" style="top:481.0px">Join</div>
<div class="cat" style="top:515.0px">Machine Le...</div>
<div class="cat" style="top:549.0px">Scripting</div>
<div class="itm" style="top:146.9px">Pyramid Co...</div>
<div class="itm" style="top:179.4px">Access</div>
<div class="itm" style="top:211.4px">Excel</div>
<div class="itm" style="top:243.4px">Google She...</div>
<div class="itm" style="top:275.4px">JSON</div>
<div class="itm" style="top:307.4px">Multi files</div>
<div class="itm" style="top:339.4px">Parquet</div>
<div class="itm" style="top:371.4px">Sas Data Set</div>
<div class="itm" style="top:403.4px">Text</div>
<div class="itm" style="top:435.4px">XML</div>
<div class="a" style="left:188px;top:169px;width:109px;height:1px;background:#333"></div>


<svg class="a" style="left:0;top:100px" width="300" height="613" viewBox="0 100 300 613">
 <defs>
  <filter id="ash" x="-30%" y="-30%" width="160%" height="160%"><feDropShadow dx="1.2" dy="1.6" stdDeviation="1.3" flood-color="#000" flood-opacity="0.45"/></filter>
  <g id="db">
   <path d="M0 3 Q0 0 9.2 0 Q18.4 0 18.4 3 V17 Q18.4 20 9.2 20 Q0 20 0 17Z" fill="#6c6c6c"/>
   <path d="M0 7.3 Q9.2 10.3 18.4 7.3 M0 12.6 Q9.2 15.6 18.4 12.6" fill="none" stroke="#4a4a4a" stroke-width="1.4"/>
  </g>
  <g id="doc"><path d="M0 0 H13 L18 5 V24 H0Z" fill="#d2d2d2"/><path d="M13 0 V5 H18Z" fill="#a0a0a0"/></g>
 </defs>
 <!-- header icons -->
 <path d="M23 111 L27.5 116 L23 121" fill="none" stroke="#d8d8d8" stroke-width="1.2"/>
 <circle cx="259.2" cy="115.3" r="4.6" fill="none" stroke="#d0d0d0" stroke-width="1.5"/>
 <path d="M262.6 118.8 L266 122.2" stroke="#d0d0d0" stroke-width="1.7"/>
 <path d="M284.3 111 L279.6 116 L284.3 121" fill="none" stroke="#d0d0d0" stroke-width="1.2"/>
 <!-- left column icons -->
 <g fill="none" stroke="#e3ae6e" stroke-width="1.1">
  <rect x="13.3" y="140.6" width="3.8" height="3.8"/>
  <rect x="13.3" y="150.6" width="3.8" height="3.8"/>
  <rect x="24.2" y="145.5" width="3.8" height="3.8"/>
 </g>
 <path d="M18.5 142.2 H20.3 V152.5 H18.5 M20.3 147.4 H23.6" fill="none" stroke="#bdbdbd" stroke-width="1"/>
 <path d="M21 175.5 L28.5 183.8 L21 189.5 L13.3 183.8Z M21 175.5 V189.5" fill="none" stroke="#c9a26a" stroke-width="1.1"/>
 <!-- category icons -->
 <use href="#db" x="62" y="138"/>
 <path d="M70 152 V150.5 H75 L76.5 152 H82.5 V154.5 M69.5 161 L72.5 154.5 H85.5 L82.5 161Z M70 152 V161" fill="#575757" stroke="#e3ae6e" stroke-width="1.1"/>
 <use href="#db" x="62" y="172"/>
 <g fill="#525252" stroke="#e3ae6e" stroke-width="1.1"><path d="M73 183.5 Q73 181.5 79 181.5 Q85 181.5 85 183.5 V193 Q85 195 79 195 Q73 195 73 193Z"/><path d="M73 183.5 Q73 185.5 79 185.5 Q85 185.5 85 183.5 M73 186.8 Q79 189 85 186.8 M73 190 Q79 192.2 85 190" fill="none"/></g>
 <use href="#db" x="62" y="206"/>
 <g fill="#525252" stroke="#e3ae6e" stroke-width="1.1"><circle cx="74.8" cy="218.8" r="2"/><circle cx="74.8" cy="227" r="2"/><circle cx="82.8" cy="216.8" r="2"/><path d="M75.5 225 L81.5 218.3 M74.8 220.8 V225"/></g>
 <use href="#db" x="62" y="240"/>
 <path d="M71 261.5 Q68.5 261.5 68.5 258.5 Q68.5 255.8 71.5 255.8 Q72 252 76 252 Q80 252 80.5 255.8 Q84.5 256 84.5 258.8 Q84.5 261.5 81.5 261.5Z" fill="#525252" stroke="#e3ae6e" stroke-width="1.1"/>
 <use href="#db" x="62" y="274"/>
 <path d="M73 285 H79 L82.5 288.5 V296.5 H73Z M79 285 V288.5 H82.5" fill="#525252" stroke="#e3ae6e" stroke-width="1.1"/>
 <use href="#db" x="61.5" y="307.5"/>
 <g fill="none" stroke="#8fb4ea" stroke-width="1.1"><circle cx="77" cy="323.8" r="5.3" fill="#525252"/><path d="M77 316.8 V320.5 M77 327 V330.8 M70 323.8 H73.7 M80.3 323.8 H84"/></g>
 <!-- select -->
 <g fill="none" stroke="#c79ee0" stroke-width="1.1"><path d="M62.5 343.5 Q62.5 341 68.8 341 Q75 341 75 343.5 V352.5 Q75 355 68.8 355 Q62.5 355 62.5 352.5Z M62.5 343.5 Q62.5 346 68.8 346 Q75 346 75 343.5 M62.5 346.8 Q68.8 349.5 75 346.8 M62.5 350 Q68.8 352.7 75 350"/></g>
 <path d="M63 360 H71 M68 357.3 L71 360 L68 362.7" fill="none" stroke="#e8e8e8" stroke-width="1"/>
 <g fill="#8a8a8a"><rect x="73" y="355.6" width="2.6" height="2"/><rect x="76.8" y="355.6" width="2.6" height="2"/><rect x="80.6" y="355.6" width="2.6" height="2"/></g>
 <g fill="#c79ee0"><rect x="73" y="358.6" width="2.6" height="2.2"/><rect x="76.8" y="358.6" width="2.6" height="2.2"/><rect x="80.6" y="358.6" width="2.6" height="2.2"/><rect x="73" y="361.8" width="2.6" height="2.2"/><rect x="76.8" y="361.8" width="2.6" height="2.2"/><rect x="80.6" y="361.8" width="2.6" height="2.2"/></g>
 <!-- preparation -->
 <g fill="none" stroke="#9a9a9a" stroke-width="1.1"><rect x="61.5" y="375.7" width="3.6" height="3.6"/><rect x="61.5" y="395" width="3.6" height="3.6"/><rect x="80.8" y="395" width="3.6" height="3.6"/><path d="M65.3 377.5 H73 M63.3 379.5 V395 M65.3 396.8 H80.8 M82.6 389 V395"/></g>
 <path d="M70 392.2 L69.8 389.3 L79.6 379.5 L82.6 382.5 L72.8 392.3Z M78.2 380.9 L81.2 383.9" fill="none" stroke="#49d2c0" stroke-width="1.1"/>
 <!-- gen-ai -->
 <path d="M73 409.5 V432 L61.5 424.5Z" fill="none" stroke="#cfcfcf" stroke-width="0.5"/>
 <g stroke="#d8d8d8" stroke-width="0.8"><path d="M62.8 424.8 L72.5 414 M64.8 426 L72.5 417.5 M66.8 427.5 L72.5 421 M68.8 428.8 L72.5 424.5 M70.8 430 L72.5 428"/></g>
 <path d="M73.5 409.5 L85.5 424.5 L73.5 432Z" fill="none" stroke="#5ce5b5" stroke-width="1"/>
 <path d="M76.5 413 V430 M79.5 417 V428.3 M82.5 420.8 V426.5" stroke="#5ce5b5" stroke-width="1"/>
 <!-- column op -->
 <g fill="#b5b5b5"><rect x="62" y="444" width="4.4" height="4"/><rect x="67.8" y="444" width="4.4" height="4"/><rect x="73.6" y="444" width="4.4" height="4"/><rect x="79.4" y="444" width="4.4" height="4"/></g>
 <g fill="#e6b070"><rect x="62" y="450" width="4.4" height="17"/><rect x="67.8" y="450" width="4.4" height="17"/><rect x="73.6" y="450" width="4.4" height="17"/><rect x="79.4" y="450" width="4.4" height="17"/></g>
 <!-- join -->
 <g fill="#7a7a7a"><rect x="61" y="478.5" width="11" height="1.6"/><rect x="61" y="481.2" width="1.6" height="11"/><rect x="64" y="481.2" width="1.6" height="11"/><rect x="67" y="481.2" width="1.6" height="11"/></g>
 <g fill="#b5b5b5"><rect x="70" y="488" width="3" height="2.4"/><rect x="74" y="488" width="3" height="2.4"/><rect x="78" y="488" width="3" height="2.4"/><rect x="82" y="488" width="3" height="2.4"/></g>
 <g fill="#e5644a"><rect x="70" y="492" width="3" height="9.5"/><rect x="74" y="492" width="3" height="9.5"/><rect x="78" y="492" width="3" height="9.5"/><rect x="82" y="492" width="3" height="9.5"/></g>
 <path d="M76 480.5 V478.6 H82.8 V485 M80.6 483.2 L82.8 485.5 L85 483.2" fill="none" stroke="#4ba3e0" stroke-width="1.1"/>
 <!-- ML -->
 <path d="M67 513 Q71 512 72 514 V531 Q70 532.5 66.5 531 Q63 531 63 528 Q61 526 62.5 523 Q61 520 63 517.5 Q63.5 514 67 513Z" fill="#b494ee"/>
 <g stroke="#b494ee" stroke-width="1" fill="none"><path d="M72 517 H76.5 L79 514.5 M72 522.5 H82 M72 527.8 H76.5 L79 530.5"/></g>
 <g fill="#b494ee"><circle cx="79.8" cy="514" r="2.1"/><circle cx="83" cy="522.5" r="2.1"/><circle cx="79.8" cy="531" r="2.1"/></g>
 <g stroke="#ececec" stroke-width="0.8"><path d="M67.5 517 H72 M67.5 522.5 H72 M67.5 527.8 H72"/></g>
 <!-- scripting -->
 <path d="M65.5 547 H84.2 Q85.5 547 85.5 549.5 Q85.5 551 83.5 551 H82.5 V566.5 Q82.5 568.5 80.5 568.5 H63 Q61 568.5 61 566.5 V563 H65.5 Z M66 551 V563 M72 563 V568" fill="none" stroke="#e07a22" stroke-width="2"/>
 <path d="M61.5 563.5 H72 V568 H63 Q61.5 568 61.5 566.5Z" fill="#e07a22"/>
 <!-- items icons -->
 <g transform="translate(185.8,137) scale(0.04)">
  <polygon fill="#6d6e70" points="368,150 368,632 82,480 250,283 250,405 185,460 290,520 290,230"/>
  <polygon fill="#2ea9dc" points="395,150 680,480 510,575 510,515 575,465 470,340 470,600 395,632"/>
 </g>
 <!-- access -->
 <path d="M200 177.3 H211.5 V196.3 H200" fill="none" stroke="#d24b4b" stroke-width="1"/>
 <path d="M202.5 181 H208.8 M202.5 185 H208.8 M202.5 189 H208.8 M202.5 193 H208.8" stroke="#d24b4b" stroke-width="1.8"/>
 <path d="M188.3 177.5 L201.5 175.5 V198.5 L188.3 196.5Z" fill="#d24b4b"/>
 <text x="190.8" y="191.3" font-family="Liberation Sans" font-weight="700" font-size="10.5" fill="#fff">A</text>
 <!-- excel -->
 <path d="M200 209.3 H211.5 V228.3 H200" fill="none" stroke="#2b9b63" stroke-width="1"/>
 <path d="M202.5 213 H208.8 M202.5 216.5 H208.8 M202.5 220 H208.8 M202.5 223.5 H208.8 M205.6 211 V226" stroke="#2b9b63" stroke-width="1.2"/>
 <path d="M188.3 209.5 L201.5 207.5 V230.5 L188.3 228.5Z" fill="#1f8e57"/>
 <text x="191" y="223.3" font-family="Liberation Sans" font-weight="700" font-size="10.5" fill="#fff">X</text>
 <!-- google sheets -->
 <path d="M193 240.5 H205 L210.5 246 V262 Q210.5 263 209.5 263 H194 Q193 263 193 262Z" fill="#23a566"/>
 <path d="M205 240.5 V246 H210.5Z" fill="#8ed1b0"/>
 <path d="M197 251.8 H206.5 V258.3 H197Z M197 254 H206.5 M197 256.1 H206.5 M201.7 251.8 V258.3" fill="none" stroke="#fff" stroke-width="1"/>
 <!-- json -->
 <use href="#doc" x="191.5" y="271"/>
 <rect x="188.5" y="279.5" width="24" height="9.5" fill="#d760d8"/>
 <text x="190.5" y="287.3" font-family="Liberation Mono" font-size="7.2" fill="#fff" letter-spacing="0.4">JSON</text>
 <!-- multi files -->
 <path d="M190.8 306 V326.5 H205" fill="none" stroke="#e8e8e8" stroke-width="0.9"/>
 <path d="M192.8 304 V324.5 H207" fill="none" stroke="#e8e8e8" stroke-width="0.9"/>
 <path d="M195 302 H205 L209.8 306.8 V322.5 H195Z" fill="#f2f2f2"/>
 <path d="M205 302 V306.8 H209.8Z" fill="#b8b8b8"/>
 <path d="M197.5 309 H207 M197.5 311.6 H207 M197.5 314.2 H207 M197.5 316.8 H207 M197.5 319.4 H204" stroke="#444" stroke-width="1"/>
 <!-- parquet -->
 <path d="M188.5 347 L199 337 L212.5 345 L200.5 356.5Z" fill="#8cc5ef"/>
 <g stroke="#5a5a5a" stroke-width="0.9"><path d="M191.5 344.5 L204 352 M194.5 341.5 L207 349 M197.5 339 L210 346.5 M195 351.5 L206 341 M199 353.5 L209.5 343.5"/></g>
 <!-- sas -->
 <use href="#doc" x="191" y="367"/>
 <rect x="188.5" y="376" width="24" height="9.5" fill="#1d4a6e"/>
 <text x="191" y="384" font-family="Liberation Sans" font-weight="700" font-size="8.2" fill="#fff" letter-spacing="0.3">SAS</text>
 <!-- text -->
 <path d="M191 399 H204 L209 404 V423 H191Z" fill="#f0f0f0"/><path d="M204 399 V404 H209Z" fill="#aaa"/>
 <path d="M193.5 402.5 H202 M193.5 405 H206 M193.5 419 H206" stroke="#555" stroke-width="0.9"/>
 <rect x="188.5" y="408" width="24" height="9.5" fill="#d6a62a"/>
 <text x="191" y="415.8" font-family="Liberation Sans" font-size="7.6" fill="#fff">TEXT</text>
 <!-- xml -->
 <use href="#doc" x="191" y="431"/>
 <rect x="188.5" y="440" width="24" height="9.5" fill="#78a843"/>
 <text x="191.5" y="447.8" font-family="Liberation Sans" font-size="7.6" fill="#fff" letter-spacing="0.5">XML</text>
 <!-- annotation arrows -->
 <g filter="url(#sh)">
 </g>
 <g filter="url(#ash)"><path d="M37.6 165.3 L62.5 193.3" stroke="#e6a020" stroke-width="4.6" stroke-linecap="round"/><path d="M28.3 154.8 L34.5 176.1 L36.5 175.0 L38.3 166.0 L47.4 165.3 L48.7 163.4Z" fill="#e6a020" stroke="#e6a020" stroke-width="0.8" stroke-linejoin="round"/></g>
 <g filter="url(#ash)"><path d="M37.5 196.9 L62.5 225.6" stroke="#e8e040" stroke-width="4.6" stroke-linecap="round"/><path d="M28.3 186.4 L34.3 207.7 L36.3 206.6 L38.2 197.7 L47.3 197.0 L48.6 195.2Z" fill="#e8e040" stroke="#e8e040" stroke-width="0.8" stroke-linejoin="round"/></g>
 <!-- lock + blue arrow -->
 <path d="M17.9 694 V692.3 Q17.9 689.6 20.9 689.6 Q23.9 689.6 23.9 692.3 V694" fill="none" stroke="#e0ac6e" stroke-width="1.4"/>
 <rect x="15.6" y="693.6" width="10.6" height="9.4" fill="#e0ac6e"/>
 <rect x="19.9" y="697" width="1.9" height="2.8" fill="#4a3a22"/>
 <g filter="url(#ash)"><path d="M38.9 683.7 L67.5 653.8" stroke="#54aef0" stroke-width="4.0" stroke-linecap="round"/><path d="M29.9 693.1 L49.7 685.7 L48.4 683.8 L39.6 683.0 L38.3 674.2 L36.4 673.0Z" fill="#54aef0" stroke="#54aef0" stroke-width="0.8" stroke-linejoin="round"/></g>
</svg>

<!-- bottom -->

<div class="a" style="left:0;top:713px;width:1179px;height:3px;background:#232323"></div>
<div class="a" style="left:0;top:716px;width:1179px;height:3px;background:#f5b81f"></div>
<div class="a" style="left:0;top:745px;width:8px;height:8px;background:#dcdcdc"></div>
<div class="a" style="left:1171px;top:745px;width:8px;height:8px;background:#dcdcdc"></div>
<div class="a" style="left:0;top:719px;width:1179px;height:34px;background:#161616;border-bottom-left-radius:7px;border-bottom-right-radius:7px"></div>
<div class="a" style="left:100px;top:716px;width:89.5px;height:33.5px;background:#262626;border:3px solid #f5b81f;border-top:none;border-radius:0 0 6px 6px"></div>
<div class="a" style="left:131px;top:722px;width:18px;height:18px;background:#2f3337"></div>
<div class="a" style="left:149px;top:722px;width:17px;height:18px;background:#3d3430"></div>
<svg class="a" style="left:0;top:716px" width="1179" height="37" viewBox="0 716 1179 37">
 <path d="M14 730.8 H27 M14 734.9 H27 M14 738.9 H27" stroke="#e6e6e6" stroke-width="1.7"/>
 <path d="M47 740 V727.3 H54.5 L55.5 729.3 H62 V740Z" fill="#cfcfcf"/>
 <circle cx="57.6" cy="736.3" r="4.4" fill="#161616" stroke="#d4d4d4" stroke-width="1.2"/>
 <path d="M54.6 739.4 L52.2 742.2" stroke="#d4d4d4" stroke-width="1.3"/>
 <path d="M77.5 728.3 H86.2 V730.3 L82.6 733.5 V736.3 H81 V733.5 L77.5 730.3Z" fill="none" stroke="#d4d4d4" stroke-width="1.1"/>
 <path d="M87.8 728.3 H93 V740.5 M77.5 733.8 V740.7 H83.5" fill="none" stroke="#d4d4d4" stroke-width="1.1"/>
 <path d="M84.3 740.8 H88 M89.3 740.8 H93" stroke="#d4d4d4" stroke-width="1.8"/>
 <g fill="#f5b81f"><ellipse cx="124.5" cy="729.5" rx="4.2" ry="1.8"/><path d="M120.3 731.8 Q124.5 734 128.7 731.8 V733.5 Q124.5 735.7 120.3 733.5Z"/><path d="M120.3 735.3 Q124.5 737.5 128.7 735.3 V737 Q124.5 739.2 120.3 737Z"/></g>
 <path d="M170.5 730.5 H181 L175.8 736Z" fill="#f4f4f4"/>
 <path d="M208.5 729 V740 M203 734.5 H214" stroke="#e8e8e8" stroke-width="1.7"/>
 <!-- right tray -->
 <path d="M1078.7 727.5 V742.5 M1078.7 727.5 L1085.8 736.8 L1078.7 742.5 M1081.3 731 V740.5 M1083.6 734 V738.8" fill="none" stroke="#555" stroke-width="0.9"/>
 <path d="M1070.3 737 L1078.2 728.5 M1071.5 738.2 L1078.2 731 M1072.8 739.4 L1078.2 733.6 M1074.2 740.6 L1078.2 736.2 M1075.6 741.7 L1078.2 738.8 M1070.3 737 L1078.7 742.5" fill="none" stroke="#555" stroke-width="0.9"/>
 <circle cx="1104" cy="734.2" r="8" fill="#e5251f"/>
 <text x="1097.6" y="738.3" font-family="Liberation Sans" font-size="11" fill="#fff" letter-spacing="-0.5">60</text>
 <path d="M1114.5 732.5 L1120 727.8 L1127.3 735.3 L1122.5 739.5 Q1122.3 736.5 1120.8 735 Q1118.5 733 1114.5 732.5Z M1121 737 L1128.5 742.3" fill="none" stroke="#dcdcdc" stroke-width="1.1" stroke-linejoin="round"/>
 <path d="M1137.8 733 H1144 L1140.9 737.3Z" fill="#dfe6f0"/>
 <path d="M1168 730 A7 7 0 1 0 1167.5 742" fill="none" stroke="#d8d8d8" stroke-width="1.2"/>
 <path d="M1165.5 733.2 A3.6 3.6 0 1 0 1163.5 739.5" fill="none" stroke="#d8d8d8" stroke-width="1.2"/>
 <circle cx="1163" cy="735.8" r="0.9" fill="#d8d8d8"/>
 <rect x="1163.8" y="737" width="6.5" height="6.2" fill="#10cc20"/>
</svg>


</body></html>
